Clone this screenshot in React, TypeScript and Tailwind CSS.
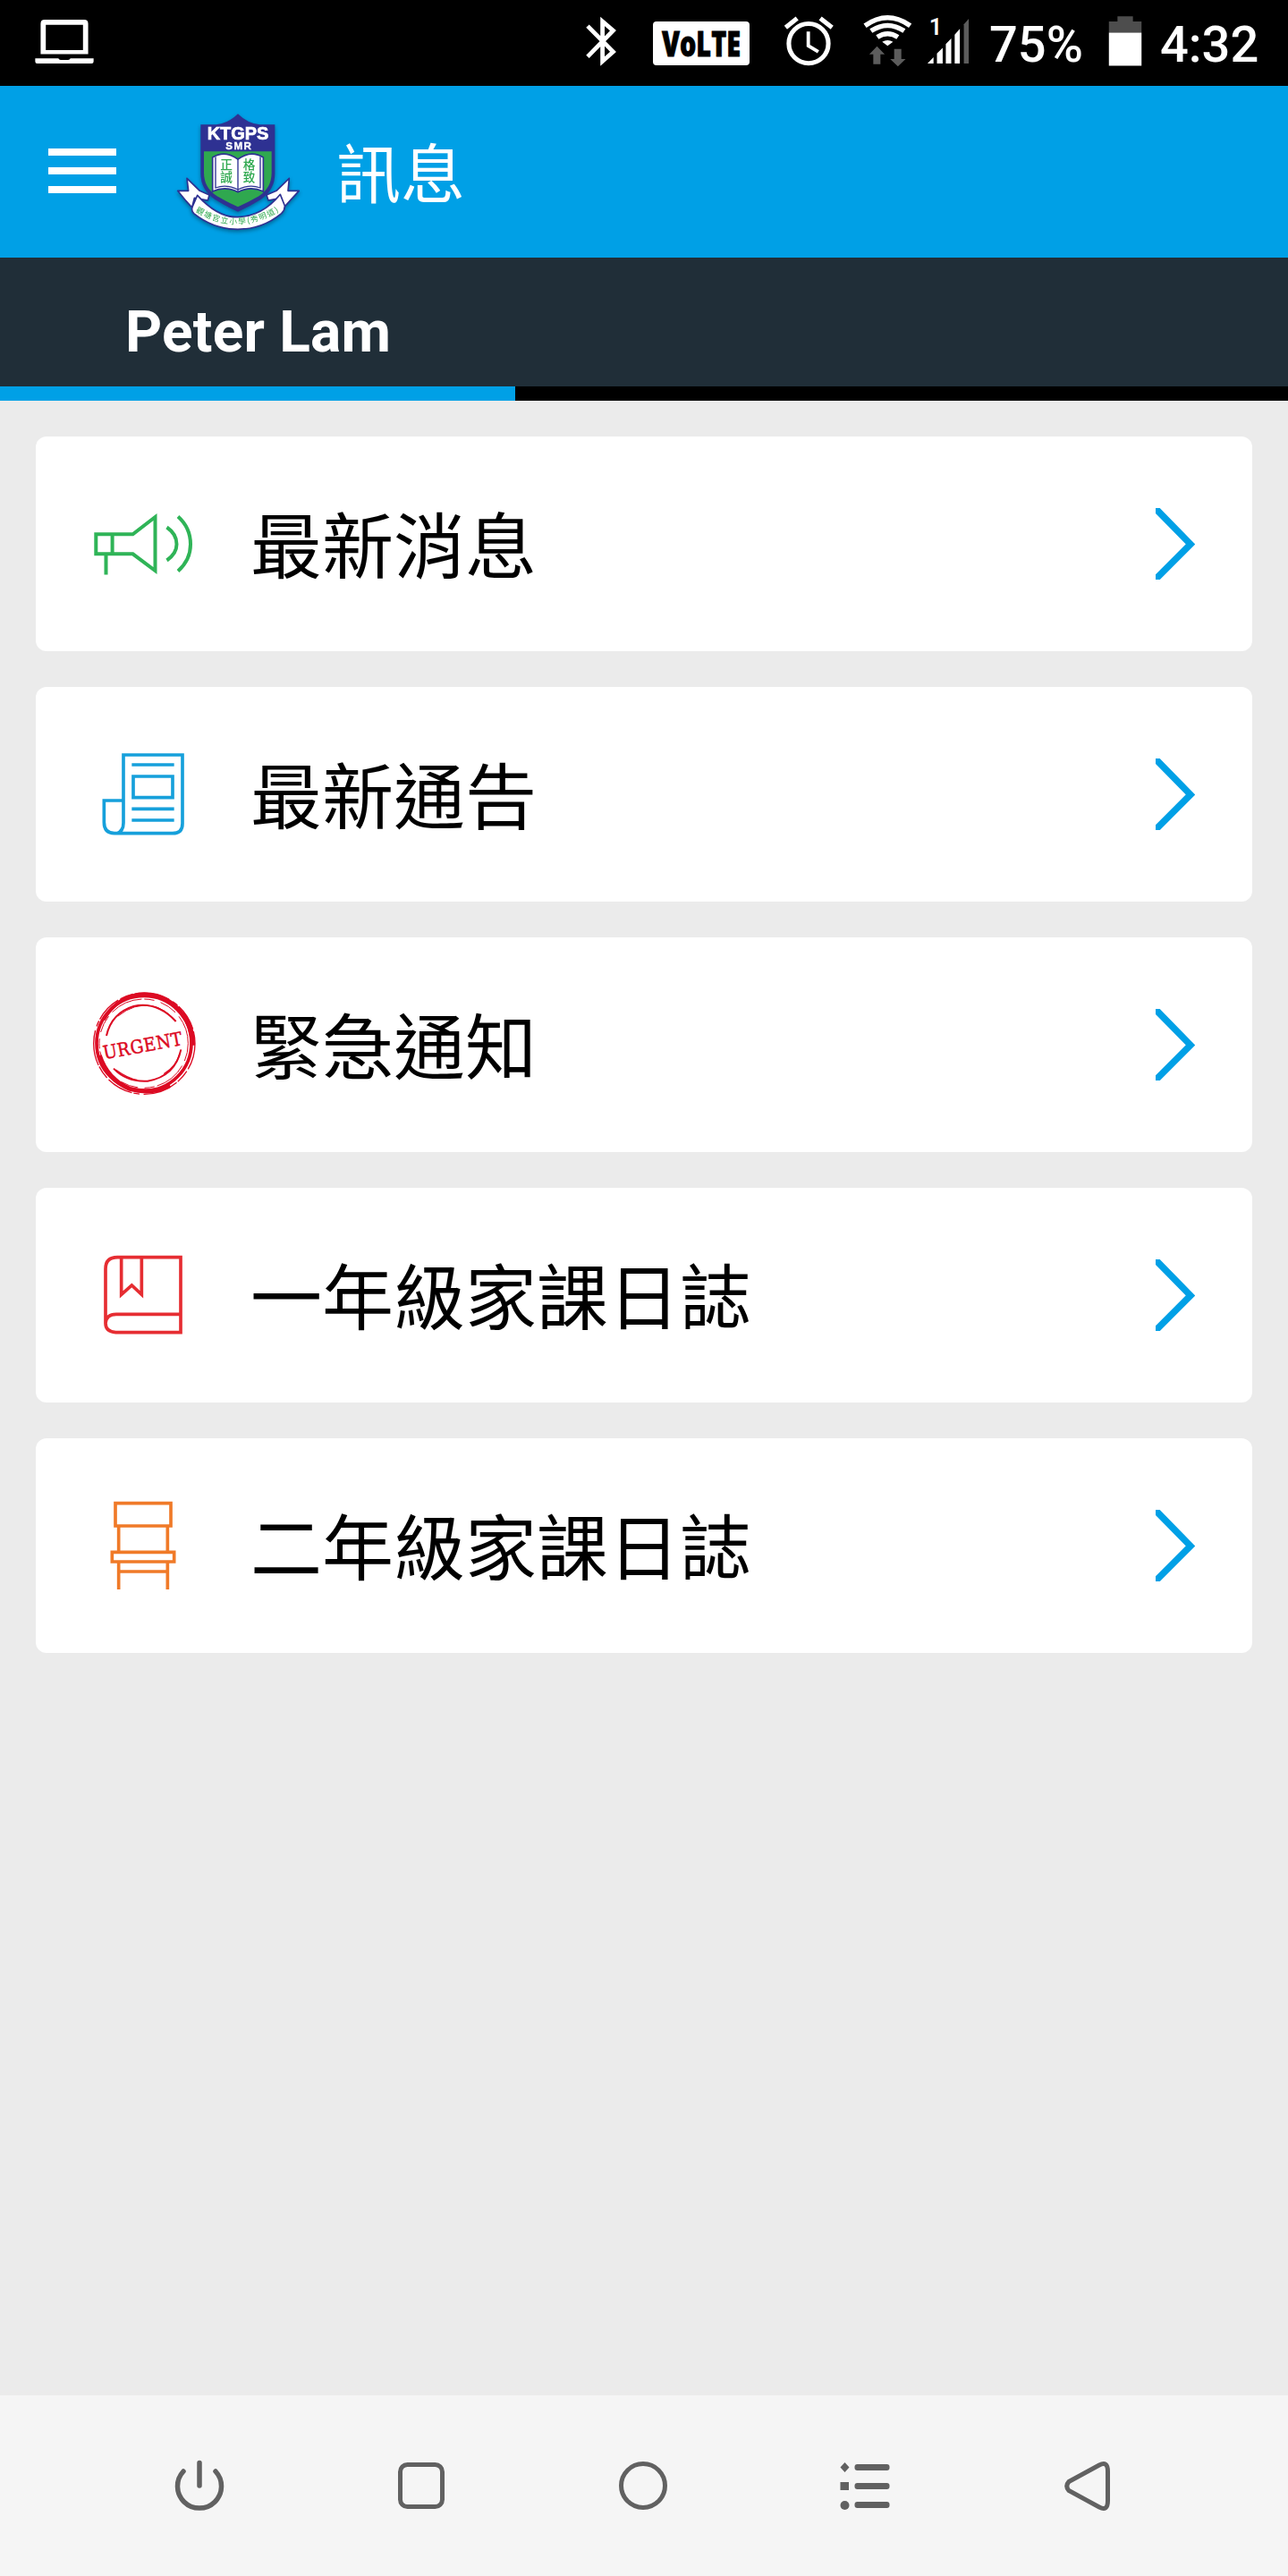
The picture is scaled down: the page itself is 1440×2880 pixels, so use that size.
import type { ReactNode } from 'react'

interface MenuItem {
  label: string
  icon: ReactNode
}

function StatusBar() {
  return (
    <div className="flex h-24 items-center bg-black pl-[38px] font-['Roboto',sans-serif] text-[56px] font-medium leading-none text-white">
      {/* Laptop */}
      <svg className="h-24 w-[68px] shrink-0" viewBox="114 0 204 300" fill="none">
        <path d="M133 189V83q0-14 14-14h138q14 0 14 14v106ZM151 87v88h130V87Z" fill="white" fillRule="evenodd" />
        <path d="M114 204h81q2 5 8 5h26q6 0 8-5h81v11q0 7-7 7H121q-7 0-7-7Z" fill="white" />
      </svg>

      {/* Bluetooth */}
      <svg className="ml-[549px] h-24 w-[35px] shrink-0" viewBox="105 0 105 300" fill="none" stroke="white" strokeWidth="15">
        <path d="M109 91L198 181L161 214V75L198 107L109 198" />
      </svg>

      <div className="ml-10 mt-px flex h-[49px] w-[108px] shrink-0 items-center justify-center rounded-[4px] bg-white">
        <svg className="h-[49px] w-[108px] overflow-visible" viewBox="0 0 108 49">
          <text
            x="10"
            y="38.5"
            textLength="88"
            lengthAdjust="spacingAndGlyphs"
            fontFamily="Open Sans, sans-serif"
            fontSize="38"
            fontWeight="800"
            fill="black"
            stroke="black"
            strokeWidth="0.8"
          >
            VoLTE
          </text>
        </svg>
      </div>

      {/* Alarm */}
      <svg className="ml-[37px] h-24 w-[58px] shrink-0" viewBox="765 0 174 300" fill="none" stroke="white">
        <circle cx="852" cy="152" r="69" strokeWidth="16" />
        <path d="M772 96L812 64M893 64L934 96" strokeWidth="16" />
        <path d="M851 110V160L886 181" strokeWidth="12" />
      </svg>

      {/* Wifi with traffic arrows */}
      <svg className="ml-[31px] h-24 w-[57px] shrink-0" viewBox="1032 0 171 300" fill="none">
        <path d="M1038 90Q1117 34 1196 90M1059 108Q1117 70 1175 108M1081 130Q1117 106 1153 130" stroke="white" strokeWidth="17" />
        <path d="M1098 146Q1117 135 1136 146L1117 160Z" fill="white" />
        <path d="M1080 162L1107 190H1092V224H1067V190H1053ZM1153 232L1180 206H1165V171H1140V206H1126Z" fill="#5c5c5c" />
      </svg>

      {/* Signal */}
      <svg className="ml-[15px] h-24 w-12 shrink-0" viewBox="48 0 144 300">
        <text x="54" y="123" fontFamily="Roboto, sans-serif" fontSize="80" fontWeight="600" fill="white">
          1
        </text>
        <path d="M48 222L69 200V222ZM81 222V187L101 167V222ZM112 222V154L131 134V222ZM143 222V121L161 101V222Z" fill="white" />
        <path d="M175 222V85L192 66V222Z" fill="#5c5c5c" />
      </svg>

      <span className="ml-[22px] w-[120px] shrink-0 pt-1">75%</span>

      {/* Battery */}
      <svg className="ml-[13px] h-24 w-[38px] shrink-0" viewBox="657 0 114 300">
        <path d="M657 114V75H687V57H741V75H771V114Z" fill="#4d4d4d" />
        <path d="M657 114H771V230H657Z" fill="white" />
      </svg>

      <span className="ml-5 shrink-0 pt-1">4:32</span>
    </div>
  )
}

function SchoolLogo() {
  return (
    <svg className="h-40 w-[170px] shrink-0 drop-shadow-[0_2px_2px_rgba(0,0,0,0.35)]" viewBox="0 6 510 480">
      <defs>
        <path id="motto" d="M114 378Q258 472 416 366" />
      </defs>

      {/* Shield */}
      <path d="M258 52Q290 84 331 88H382V252Q382 306 336 338Q298 362 258 380Q218 362 180 338Q133 306 133 252V88H185Q226 84 258 52Z" fill="#2e3192" />
      <path d="M144 178H371V250Q371 300 328 328Q296 347 258 364Q220 347 188 328Q144 300 144 250Z" fill="#2fa84f" />
      <text
        x="258"
        y="138"
        textAnchor="middle"
        textLength="206"
        lengthAdjust="spacingAndGlyphs"
        fontFamily="Liberation Sans, sans-serif"
        fontSize="58"
        fontWeight="700"
        fill="white"
        stroke="white"
        strokeWidth="2"
      >
        KTGPS
      </text>
      <text x="260" y="172" textAnchor="middle" textLength="86" fontFamily="Liberation Sans, sans-serif" fontSize="35" fontWeight="700" fill="white" stroke="white">
        SMR
      </text>

      {/* Book */}
      <path d="M173 198Q214 172 258 204Q302 172 343 198V312Q300 292 258 314Q216 292 173 312Z" fill="white" stroke="#2e3192" strokeWidth="5" />
      <path d="M183 196V300Q220 286 258 306Q296 286 333 300V196M258 204V312" fill="none" stroke="#2e3192" strokeWidth="4" />
      <g fontFamily="Noto Sans CJK TC, sans-serif" fontSize="41" fontWeight="500" fill="#2fa84f">
        <text x="199" y="236">正</text>
        <text x="199" y="280">誠</text>
        <text x="275" y="236">格</text>
        <text x="275" y="280">致</text>
      </g>

      {/* Ribbon */}
      <g fill="white" stroke="#2e3192" strokeWidth="5" strokeLinejoin="round">
        <path d="M87 268L130 310L162 324L157 342L112 334L104 366L84 344L56 310L92 310Z" />
        <path d="M430 268L387 310L354 324L360 342L403 334L412 366L432 344L463 310L426 310Z" />
        <path d="M122 325Q190 400 258 398Q340 396 400 322L415 360Q416 374 404 386Q340 439 258 439Q176 439 110 386Q100 376 106 362Z" />
      </g>
      <text fontFamily="Noto Sans CJK TC, sans-serif" fontSize="26" letterSpacing="4.5" fill="#2fa84f">
        <textPath href="#motto" startOffset="2">
          觀塘官立小學(秀明道)
        </textPath>
      </text>
    </svg>
  )
}

function Header() {
  return (
    <header className="flex h-48 items-center bg-[#00a0e6] pl-[54px]">
      <div className="mt-[-2px] flex w-[76px] shrink-0 flex-col gap-[13px]">
        <div className="h-2 bg-white" />
        <div className="h-2 bg-white" />
        <div className="h-2 bg-white" />
      </div>
      <div className="ml-[50px] flex shrink-0">
        <SchoolLogo />
      </div>
      <h1 className="mb-[5px] ml-[26px] font-['Noto_Sans_CJK_TC',sans-serif] text-[72px] font-normal leading-none text-white">訊息</h1>
    </header>
  )
}

function StudentTabs() {
  return (
    <div className="bg-black">
      <div className="flex h-36 items-center bg-[#202e38] pl-[140px] pt-[23px]">
        <span className="font-['Roboto',sans-serif] text-[64px] font-bold leading-none tracking-[0.2px] text-white">Peter Lam</span>
      </div>
      <div className="h-4 w-[576px] bg-[#00a0e6]" />
    </div>
  )
}

function MegaphoneIcon() {
  return (
    <svg className="size-[120px]" viewBox="0 0 120 120" fill="none" stroke="#2fb457" strokeWidth="4">
      <path d="M7.3 49.3H48.5L73.5 30V90L48.5 71.3H7.3ZM25.6 49.3V71.3M18.5 71.3V94.5" />
      <path d="M86.5 41.5Q97.5 49 97.5 60.5Q97.5 71 86.5 78.5M99 29.5Q113 42 113 60.5Q113 78 99 90.5" />
    </svg>
  )
}

function NoticeIcon() {
  return (
    <svg className="size-[120px]" viewBox="30 24 360 360" fill="none" stroke="#16a0db" strokeWidth="11">
      <path d="M144 225V72H342V302Q342 335 309 335H114Q79 335 79 298V225H144V300Q144 328 122 335" />
      <path d="M177 144H309V215H177ZM172 105H314M172 253H314M172 291H314" />
    </svg>
  )
}

function UrgentIcon() {
  return (
    <svg className="size-[120px] overflow-visible" viewBox="30 54 360 360" fill="none" stroke="#dc0a23">
      {/* Rough outer ring */}
      <circle cx="213" cy="229" r="159" strokeWidth="11" />
      <path d="M78 150Q130 60 222 65Q310 70 355 150" strokeWidth="11" />
      <path d="M340 128Q376 170 376 236" strokeWidth="16" />
      <path d="M64 270Q90 350 165 382Q240 402 300 370" strokeWidth="15" />
      <circle cx="214" cy="230" r="170" strokeWidth="4" strokeDasharray="90 8 46 5 120 14 20 6" />
      <circle cx="212" cy="230" r="149" strokeWidth="3" strokeDasharray="60 18 110 9 34 22" />
      {/* Inner arcs */}
      <path d="M87 204Q104 128 178 105Q256 88 320 156" strokeWidth="6" />
      <path d="M126 138Q180 94 240 104Q286 114 316 152" strokeWidth="3" />
      <path d="M111 314Q155 360 225 356Q318 340 337 250" strokeWidth="6" />
      <path d="M118 318Q160 348 190 352M280 332Q324 304 333 262" strokeWidth="4" />
      <text
        x="80"
        y="283"
        transform="rotate(-10.5 80 283)"
        textLength="270"
        fontFamily="DejaVu Serif, serif"
        fontSize="62"
        letterSpacing="2"
        fill="#dc0a23"
        strokeWidth="1.5"
        lengthAdjust="spacingAndGlyphs"
      >
        URGENT
      </text>
    </svg>
  )
}

function BookIcon() {
  return (
    <svg className="size-[120px]" viewBox="30 24 360 360" fill="none" stroke="#e62d32" strokeWidth="11">
      <path d="M84 300V116Q84 77 124 77H336V329H118Q84 327 84 298Q86 268 120 268H336" />
      <path d="M137 77V202L172 171L205 202V77" />
    </svg>
  )
}

function ChairIcon() {
  return (
    <svg className="size-[120px]" viewBox="30 24 360 360" fill="none" stroke="#f07a28" strokeWidth="11">
      <path d="M117 62H303V138H117ZM106 226H314V258H106Z" />
      <path d="M128 138V226M292 138V226M128 258V351M292 258V351M128 291H292" />
    </svg>
  )
}

const menuItems: MenuItem[] = [
  { label: '最新消息', icon: <MegaphoneIcon /> },
  { label: '最新通告', icon: <NoticeIcon /> },
  { label: '緊急通知', icon: <UrgentIcon /> },
  { label: '一年級家課日誌', icon: <BookIcon /> },
  { label: '二年級家課日誌', icon: <ChairIcon /> },
]

function MenuCard({ label, icon }: MenuItem) {
  return (
    <div className="flex h-60 items-center rounded-xl bg-white pl-[60px] pr-16">
      {icon}
      <span className="mb-1.5 ml-[60px] grow font-['Noto_Sans_CJK_TC',sans-serif] text-[80px] leading-none text-black">{label}</span>
      <svg className="h-20 w-11" viewBox="0 0 44 80" fill="none" stroke="#00a0e6" strokeWidth="7.5">
        <path d="M-2 -1.5L39 40.5L-2 81.5" />
      </svg>
    </div>
  )
}

function NavBar() {
  return (
    <nav className="flex h-[202px] items-start justify-between bg-[#f5f5f5] pl-[192px] pr-[194px] pt-[71px] text-[#616161]">
      {/* Power */}
      <svg className="size-[60px]" viewBox="0 0 60 60" fill="none" stroke="currentColor" strokeWidth="5.5" strokeLinecap="round">
        <path d="M31 4.5V30M13 14A24.5 24.5 0 1 0 49 14" />
      </svg>
      {/* Recents */}
      <svg className="size-[60px]" viewBox="0 0 60 60" fill="none" stroke="currentColor" strokeWidth="5">
        <rect x="6.5" y="6.5" width="47" height="47" rx="8" />
      </svg>
      {/* Home */}
      <svg className="size-[60px]" viewBox="0 0 60 60" fill="none" stroke="currentColor" strokeWidth="5">
        <circle cx="30" cy="30" r="24.5" />
      </svg>
      {/* List */}
      <svg className="size-[60px]" viewBox="0 0 60 60" fill="currentColor">
        <path d="M6.5 4L11.5 9.5L6.5 15L1.5 9.5ZM1.5 26H11V35H1.5Z" />
        <circle cx="6.5" cy="52" r="5" />
        <rect x="17.5" y="6" width="39" height="7" rx="3" />
        <rect x="17.5" y="27" width="39" height="7" rx="3" />
        <rect x="17.5" y="48" width="39" height="7" rx="3" />
      </svg>
      {/* Back */}
      <svg className="size-[60px]" viewBox="0 0 60 60" fill="none" stroke="currentColor" strokeWidth="5">
        <path d="M9 25.5L43 7Q52.5 2 52.5 14V47Q52.5 59 43 54L9 35.5Q4.5 30.5 9 25.5Z" />
      </svg>
    </nav>
  )
}

export default function App() {
  return (
    <div className="flex h-[2880px] w-[1440px] flex-col overflow-hidden bg-[#ebebeb]">
      <StatusBar />
      <Header />
      <StudentTabs />
      <main className="flex grow flex-col gap-10 p-10">
        {menuItems.map((item) => (
          <MenuCard key={item.label} {...item} />
        ))}
      </main>
      <NavBar />
    </div>
  )
}
